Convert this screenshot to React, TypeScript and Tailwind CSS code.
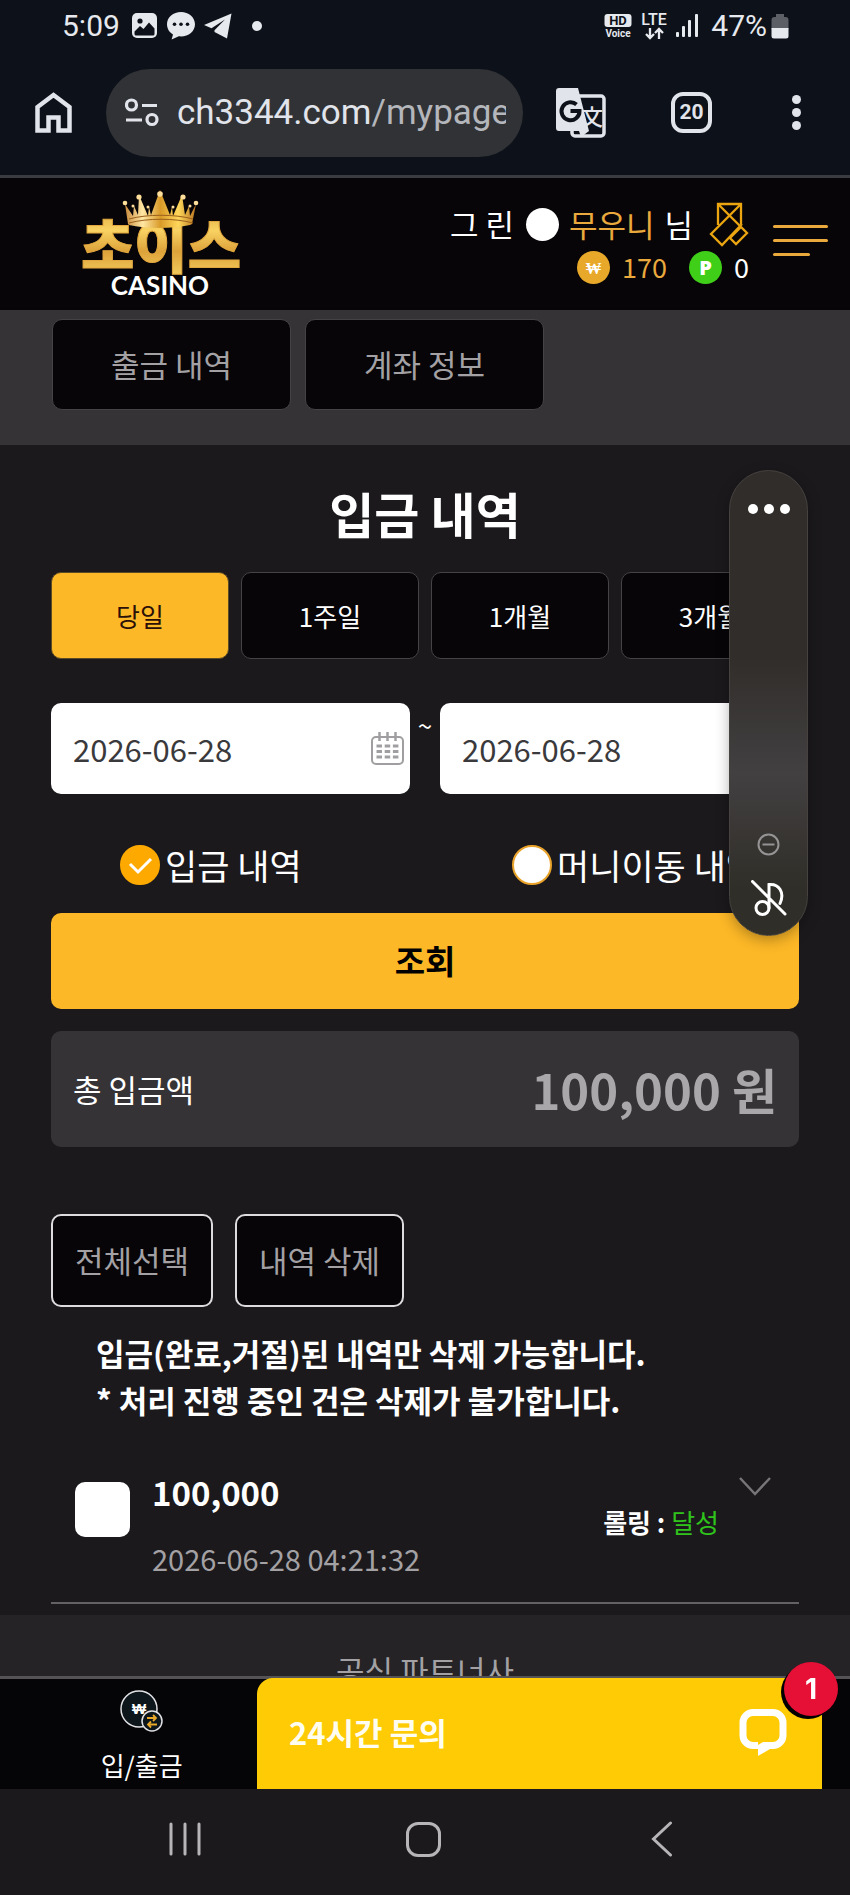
import { useState } from 'react';

const ranges = ['당일', '1주일', '1개월', '3개월'];
const historyTypes = ['입금 내역', '머니이동 내역'];

function StatusBar() {
  return (
    <div className="flex h-[50px] shrink-0 items-center justify-between pl-[62px] pr-[61px] pt-px text-[#e6e9ee]">
      <div className="flex items-center">
        <span className="font-['Roboto'] text-[30px] leading-8">5:09</span>
        <svg className="ml-3 h-[25px] w-[25px]" viewBox="0 0 25 25">
          <rect width="25" height="25" rx="5" fill="currentColor" />
          <circle cx="8" cy="8" r="2.6" fill="#0d1119" />
          <path d="M2.5 18.5 8 13l3.5 3L17 9.5l5.5 6V21a1.5 1.5 0 0 1-1.500 1.500H4A1.500 1.500 0 0 1 2.500 21z" fill="#0d1119" />
        </svg>
        <svg className="ml-[10px] h-7 w-7" viewBox="0 0 28 28">
          <path d="M14 0C6.300 0 0 5.200 0 12.200c0 4.300 2.300 8 6 10.200L4.600 27.400l7.200-3.100c.7.100 1.400.100 2.200.100 7.700 0 14-5.300 14-12.200S21.700 0 14 0z" fill="currentColor" />
          <circle cx="7.500" cy="12.300" r="1.800" fill="#0d1119" />
          <circle cx="14" cy="12.300" r="1.800" fill="#0d1119" />
          <circle cx="20.500" cy="12.300" r="1.800" fill="#0d1119" />
        </svg>
        <svg className="ml-[9px] h-[26px] w-[28px]" viewBox="0 0 28 26">
          <path d="M27.500.5 0 12l7.500 3.200L21 6.500 10.500 17.200V19L23 25.500z" fill="currentColor" />
        </svg>
        <span className="ml-5 size-[10px] rounded-full bg-current" />
      </div>
      <div className="flex items-center">
        <svg className="h-[26px] w-[28px]" viewBox="0 0 28 26" fontFamily="Roboto, sans-serif" fontWeight="700">
          <rect x="0.500" y="1" width="27" height="13" rx="3" fill="currentColor" />
          <text x="14" y="12" fontSize="13" textAnchor="middle" fill="#0d1119">HD</text>
          <text x="14" y="24" fontSize="10" textAnchor="middle" fill="currentColor">Voice</text>
        </svg>
        <svg className="ml-2 h-[28px] w-[28px]" viewBox="0 0 28 28">
          <text x="14" y="13" fontSize="16" textAnchor="middle" fill="currentColor" fontFamily="Roboto, sans-serif" fontWeight="500">LTE</text>
          <path d="M10 16v10M6 22l4 4 4-4M19 27V17M15 21l4-4 4 4" stroke="currentColor" strokeWidth="2.300" fill="none" />
        </svg>
        <svg className="ml-2 h-6 w-[23px]" viewBox="0 0 23 24" fill="currentColor">
          <rect x="0" y="18" width="3" height="5" rx="1" />
          <rect x="6" y="12" width="3" height="11" rx="1" />
          <rect x="12" y="6" width="3" height="17" rx="1" />
          <rect x="19" y="0" width="3" height="23" rx="1" />
        </svg>
        <span className="ml-3 font-['Roboto'] text-[30px] leading-8">47%</span>
        <svg className="ml-1 h-[26px] w-[18px]" viewBox="0 0 18 26">
          <path d="M5 1h8v3h1.500A3 3 0 0 1 17.500 7v9H.5V7a3 3 0 0 1 3-3H5z" fill="#5c5f66" />
          <path d="M.5 15h17v8a2.500 2.500 0 0 1-2.500 2.500H3A2.500 2.500 0 0 1 .5 23z" fill="currentColor" />
        </svg>
      </div>
    </div>
  );
}

function BrowserBar() {
  return (
    <div className="flex h-32 shrink-0 items-center border-b-3 border-[#3a3b40] pl-[35px] pr-[49px] text-[#e1e4ea]">
      <button aria-label="홈">
        <svg className="h-[41px] w-[37px]" viewBox="0 0 37 41">
          <path d="M2.500 38.500V15L18.500 3 34.500 15v23.500H23.500V25.500h-10v13z" fill="none" stroke="currentColor" strokeWidth="4.500" />
        </svg>
      </button>
      <div className="ml-[34px] flex h-[88px] min-w-0 flex-1 items-center rounded-full bg-[#303236] pl-[19px] pr-[17px]">
        <svg className="h-[29px] w-[34px] shrink-0" viewBox="0 0 34 29" fill="none" stroke="currentColor" strokeWidth="3.200">
          <circle cx="6.500" cy="7" r="5" />
          <path d="M17 7.500h15M1 22h16" />
          <circle cx="27" cy="21.500" r="5" />
        </svg>
        <div className="ml-[18px] min-w-0 flex-1 overflow-hidden whitespace-nowrap font-['Roboto'] text-[35px] leading-[48px]">
          ch3344.com<span className="text-[#b4b6bb]">/mypage</span>
        </div>
      </div>
      <button aria-label="번역" className="ml-[33px]">
        <svg className="h-[50px] w-[50px]" viewBox="0 0 50 50">
          <rect x="16" y="8" width="32" height="40" rx="3" fill="none" stroke="currentColor" strokeWidth="3.500" />
          <text x="36" y="37" fontSize="22" textAnchor="middle" fill="currentColor" fontFamily="'Noto Sans CJK KR', sans-serif" fontWeight="500">文</text>
          <path d="M3 0h19l11 43-8 6-2-6H3a3 3 0 0 1-3-3V3a3 3 0 0 1 3-3z" fill="currentColor" />
          <path d="M20.500 16.500A9 9 0 1 0 23.500 23H14.500" fill="none" stroke="#0d1119" strokeWidth="4" />
        </svg>
      </button>
      <button className="ml-[65px] flex size-[41px] items-center justify-center rounded-xl border-4 border-current font-['Roboto'] text-[21px] font-bold">
        20
      </button>
      <button aria-label="메뉴" className="ml-[80px] flex flex-col gap-1">
        <span className="size-[9px] rounded-full bg-current" />
        <span className="size-[9px] rounded-full bg-current" />
        <span className="size-[9px] rounded-full bg-current" />
      </button>
    </div>
  );
}

function Logo() {
  return (
    <svg className="h-[112px] w-[166px]" viewBox="0 0 166 112" role="img" aria-label="초이스 CASINO">
      <defs>
        <linearGradient id="gold" x1="0" y1="0" x2="0" y2="1">
          <stop offset="0" stopColor="#d89a35" />
          <stop offset="0.35" stopColor="#f8d262" />
          <stop offset="0.6" stopColor="#dda23a" />
          <stop offset="1" stopColor="#fbdc6c" />
        </linearGradient>
        <linearGradient id="crown" x1="0" y1="0" x2="1" y2="0">
          <stop offset="0" stopColor="#c98a3c" />
          <stop offset="0.25" stopColor="#ffe7a3" />
          <stop offset="0.5" stopColor="#d99a28" />
          <stop offset="0.75" stopColor="#ffd75a" />
          <stop offset="1" stopColor="#b87420" />
        </linearGradient>
      </defs>
      <text x="83" y="80" fontSize="58" textAnchor="middle" fill="url(#gold)" stroke="#e2a73e" strokeWidth="1" fontFamily="'Noto Sans CJK KR', sans-serif" fontWeight="900">초이스</text>
      <path d="M50 36 47 16l8 12 1-10 4 9 1-20 9 21 1-9 2 8 9-25 10 25 2-8 1 9 9-21 3 20 4-9 1 10 6-12-4 20-2 1c-18 4-44 4-61 0z" fill="url(#crown)" />
      <path d="M51 31c18-5 46-5 64 0M51 35c18-5 46-5 64 0" stroke="#9a5f1c" strokeWidth="1" fill="none" />
      <g fill="#ffdf9a">
        <circle cx="47" cy="15" r="2.300" />
        <circle cx="55" cy="18" r="1.500" />
        <circle cx="61" cy="9" r="2.600" />
        <circle cx="70" cy="19" r="1.500" />
        <circle cx="82" cy="6" r="2.800" />
        <circle cx="95" cy="19" r="1.500" />
        <circle cx="105" cy="9" r="2.600" />
        <circle cx="112" cy="18" r="1.500" />
        <circle cx="118" cy="15" r="2.300" />
      </g>
      <text x="82" y="107" fontSize="26" textAnchor="middle" fill="#fff" fontFamily="Lato, sans-serif" fontWeight="700">CASINO</text>
    </svg>
  );
}

function SiteHeader() {
  return (
    <header className="flex h-[132px] shrink-0 items-center bg-[#070508] pl-[78px] pr-[22px]">
      <Logo />
      <div className="ml-auto pt-1 text-[31px] text-white">
        <div className="flex h-[43px] items-center justify-end">
          <span>그 린</span>
          <span className="ml-3 size-[33px] rounded-full bg-white" />
          <span className="ml-[10px] text-[#eaa93c]">무우니</span>
          <span className="ml-[10px]">님</span>
          <svg className="ml-4 h-[45px] w-[40px]" viewBox="0 0 40 45" fill="none" stroke="#eaa511" strokeWidth="2.300">
            <path d="M9 23V2h23v20M9 2l29 29-11 11-6-6 11-11M32 2 2 32l11 11 20-21" />
          </svg>
        </div>
        <div className="flex h-[43px] items-center justify-end text-[27px]">
          <span className="flex size-[33px] items-center justify-center rounded-full bg-[#e8a829] font-['Open_Sans'] text-base font-extrabold text-white">₩</span>
          <span className="ml-3 text-[#eaa93c]">170</span>
          <span className="ml-[22px] flex size-[33px] items-center justify-center rounded-full bg-[#3fcf18] font-['Open_Sans'] text-xl font-extrabold text-white">P</span>
          <span className="ml-3">0</span>
        </div>
      </div>
      <button aria-label="전체 메뉴" className="ml-6 flex w-[55px] flex-col gap-[11px] pb-2">
        <span className="h-[3px] w-full rounded-full bg-[#eaa93c]" />
        <span className="h-[3px] w-full rounded-full bg-[#eaa93c]" />
        <span className="h-[3px] w-[37px] rounded-full bg-[#eaa93c]" />
      </button>
    </header>
  );
}

function CalendarIcon() {
  return (
    <svg className="pointer-events-none absolute right-[6px] top-[29px] h-[33px] w-[33px]" viewBox="0 0 33 33" fill="none" stroke="#a09ea1" strokeWidth="2">
      <rect x="1" y="5" width="31" height="27" rx="4" />
      <path d="M8.500 0v9M16.500 0v9M24.500 0v9" strokeWidth="2.500" />
      <path d="M5.500 14h22M5.500 19.500h22M5.500 25h22" strokeWidth="2.800" strokeDasharray="5.500 2.700" />
    </svg>
  );
}

function DateField({ label }: { label: string }) {
  return (
    <div className="relative min-w-0 flex-1">
      <input
        type="text"
        aria-label={label}
        defaultValue="2026-06-28"
        className="h-[91px] w-full rounded-[10px] bg-white pl-[22px] text-[31px] text-[#3a393c]"
      />
      <CalendarIcon />
    </div>
  );
}

function FloatingPanel() {
  return (
    <aside className="fixed right-[42px] top-[470px] flex h-[466px] w-[79px] flex-col items-center rounded-full border border-[#45423f] bg-linear-to-b from-[#302d2a] from-40% via-[#434042] via-65% to-[#302e28] to-90% pb-[19px] pt-[33px] shadow-[0_4px_14px_rgba(0,0,0,0.3)]">
      <button aria-label="더보기" className="flex gap-[6px]">
        <span className="size-[10px] rounded-full bg-white" />
        <span className="size-[10px] rounded-full bg-white" />
        <span className="size-[10px] rounded-full bg-white" />
      </button>
      <svg className="mt-auto h-[23px] w-[23px]" viewBox="0 0 23 23" fill="none" stroke="#959394" strokeWidth="2">
        <circle cx="11.500" cy="11.500" r="10" />
        <path d="M5.500 11.500h12" />
      </svg>
      <button aria-label="음소거" className="mt-6">
        <svg className="block h-9 w-9" viewBox="0 0 36 36" fill="none" stroke="#fff" strokeWidth="3" strokeLinecap="round">
          <circle cx="11.500" cy="28" r="6.500" />
          <path d="M1.500 1.500 34 34M18 28V4.500c10-1 16 8 11 19" />
        </svg>
      </button>
    </aside>
  );
}

function BottomBar() {
  return (
    <nav className="relative flex h-[113px] shrink-0 border-t-3 border-[#555356] bg-[#050406]">
      <a href="#wallet" className="flex w-1/3 flex-col items-center pt-[10px] text-[26px] text-white">
        <svg className="h-[44px] w-[46px]" viewBox="0 0 46 44">
          <circle cx="20" cy="20" r="18" fill="#0d161b" stroke="#e3e3e6" strokeWidth="1.500" />
          <text x="20" y="25" fontSize="15" textAnchor="middle" fill="#fff" fontFamily="'Open Sans', sans-serif" fontWeight="800">₩</text>
          <circle cx="33" cy="32" r="10" fill="#0d161b" stroke="#e3e3e6" strokeWidth="1.500" />
          <path d="M28 29h9m-3-3 3 3-3 3M38 35.500h-9m3-3-3 3 3 3" fill="none" stroke="#e8a829" strokeWidth="1.800" />
        </svg>
        <span className="mt-3 leading-10">입/출금</span>
      </a>
      <button className="absolute -top-px bottom-0 left-[257px] right-7 flex items-center justify-between rounded-tl-2xl bg-[#fecb04] pb-[3px] pl-8 pr-[35px] text-[31px] font-bold text-[#fffdf0]">
        24시간 문의
        <svg className="h-[48px] w-[48px]" viewBox="0 0 48 48">
          <path d="M19 37.500h-5a10 10 0 0 1-10-10v-13a10 10 0 0 1 10-10h20a10 10 0 0 1 10 10v13a10 10 0 0 1-10 10h-4" fill="none" stroke="#fff" strokeWidth="7" />
          <path d="M19 37v11l17-10-4-4h-8z" fill="#fff" />
        </svg>
        <span className="absolute -right-4 -top-4 flex size-[54px] items-center justify-center rounded-full bg-[#e60f35] font-['Inter'] text-[28px] font-bold text-white shadow-[-3px_3px_0_#000]">
          1
        </span>
      </button>
    </nav>
  );
}

function SystemNav() {
  return (
    <div className="grid h-[106px] shrink-0 grid-cols-3 items-center justify-items-center bg-[#1b191c] pb-[6px] pl-[66px] pr-[69px] text-[#b7b5b8]">
      <button aria-label="최근 앱">
        <svg className="block h-9 w-9" viewBox="0 0 36 36" stroke="currentColor" strokeWidth="3" strokeLinecap="round">
          <path d="M4 3v30M18 3v30M32 3v30" />
        </svg>
      </button>
      <button aria-label="홈 화면" className="size-[35px] rounded-xl border-3 border-current" />
      <button aria-label="뒤로">
        <svg className="block h-9 w-[22px]" viewBox="0 0 22 36" fill="none" stroke="currentColor" strokeWidth="3" strokeLinecap="round">
          <path d="M19.500 2 2.500 18l17 16" />
        </svg>
      </button>
    </div>
  );
}

export default function App() {
  const [range, setRange] = useState('당일');
  const [historyType, setHistoryType] = useState('입금 내역');

  return (
    <div className="flex h-screen flex-col bg-[#0d1119] font-['Noto_Sans_CJK_KR',sans-serif]">
      <StatusBar />
      <BrowserBar />
      <SiteHeader />

      <main className="min-h-0 flex-1 overflow-y-auto overflow-x-hidden bg-[#1b191c] text-white [scrollbar-width:none]">
        {/* My page tabs */}
        <div className="flex gap-[14px] bg-[#353336] pb-[35px] pl-[52px] pt-[9px]">
          {['출금 내역', '계좌 정보'].map((tab) => (
            <button key={tab} className="h-[91px] w-[239px] rounded-[10px] border border-[#454346] bg-[#070508] text-[31px] text-[#a3a1a4]">
              {tab}
            </button>
          ))}
        </div>

        <section className="px-[51px] pt-11">
          <h1 className="text-center text-[49px] font-bold leading-[48px]">입금 내역</h1>

          <div className="mt-[35px] grid grid-cols-4 gap-3">
            {ranges.map((item) => (
              <button
                key={item}
                onClick={() => setRange(item)}
                className={`h-[87px] rounded-[10px] border text-[26px] ${
                  range === item
                    ? 'border-[#5a4a26] bg-[#fdb827] text-[#2a1008]'
                    : 'border-[#454346] bg-[#070508] text-white'
                }`}
              >
                {item}
              </button>
            ))}
          </div>

          <div className="mt-11 flex">
            <DateField label="시작일" />
            <span className="w-[30px] text-center text-[26px] leading-[44px]">~</span>
            <DateField label="종료일" />
          </div>

          <div className="mt-[51px] flex whitespace-nowrap pl-[69px]">
            {historyTypes.map((type) => (
              <label key={type} className="relative flex h-10 shrink-0 basis-[392px] items-center gap-[5px] text-[35px] leading-10">
                <input
                  type="radio"
                  name="historyType"
                  checked={historyType === type}
                  onChange={() => setHistoryType(type)}
                  className="peer size-10 shrink-0 appearance-none rounded-full border-2 border-[#eaa32a] bg-white checked:border-[#fea900] checked:bg-[#fea900]"
                />
                <svg className="absolute left-0 top-0 hidden size-10 peer-checked:block" viewBox="0 0 40 40" fill="none" stroke="#fff" strokeWidth="3">
                  <path d="m10 19 8 8 13-13" />
                </svg>
                {type}
              </label>
            ))}
          </div>

          <button className="mt-7 h-24 w-full rounded-[10px] bg-[#fdb827] text-[33px] font-bold text-black">조회</button>

          <div className="mt-[22px] flex h-[116px] items-center justify-between rounded-[10px] bg-[#353336] px-[22px]">
            <span className="text-[31px]">총 입금액</span>
            <strong className="text-[49px] font-bold text-[#a9a7aa]">100,000 원</strong>
          </div>

          <div className="mt-[67px] flex gap-[22px] text-[31px] text-[#a3a1a4]">
            <button className="h-[93px] rounded-[10px] border-2 border-[#dddbde] bg-[#070508] px-[22px]">전체선택</button>
            <button className="h-[93px] rounded-[10px] border-2 border-[#dddbde] bg-[#070508] px-[22px]">내역 삭제</button>
          </div>

          <p className="mt-[22px] px-[45px] text-[31px] font-bold leading-[47px]">
            입금(완료,거절)된 내역만 삭제 가능합니다.
            <br />* 처리 진행 중인 건은 삭제가 불가합니다.
          </p>

          <div className="flex items-start border-b-2 border-[#636164] pb-[22px] pl-6 pr-7 pt-[47px]">
            <input type="checkbox" aria-label="100,000 선택" className="mt-3 size-[55px] appearance-none rounded-[10px] bg-white" />
            <div className="ml-[22px] leading-[44px]">
              <div className="text-[33px] font-bold">100,000</div>
              <div className="mt-[22px] text-[29px] text-[#a3a1a4]">2026-06-28 04:21:32</div>
            </div>
            <div className="ml-auto mt-[30px] text-[26px] leading-[44px]">
              <b>롤링 :</b> <span className="text-[#2fc31c]">달성</span>
            </div>
            <button aria-label="상세 보기" className="ml-5 mt-[6px]">
              <svg className="h-5 w-8" viewBox="0 0 32 20" fill="none" stroke="#777578" strokeWidth="2.500">
                <path d="m1 2 15 16L31 2" />
              </svg>
            </button>
          </div>
        </section>

        <footer className="mt-[11px] bg-[#252326] pb-10 pt-8 text-center text-[31px] leading-[46px] text-[#a3a1a4]">
          공식 파트너사
        </footer>
      </main>

      <BottomBar />
      <SystemNav />
      <FloatingPanel />
    </div>
  );
}
